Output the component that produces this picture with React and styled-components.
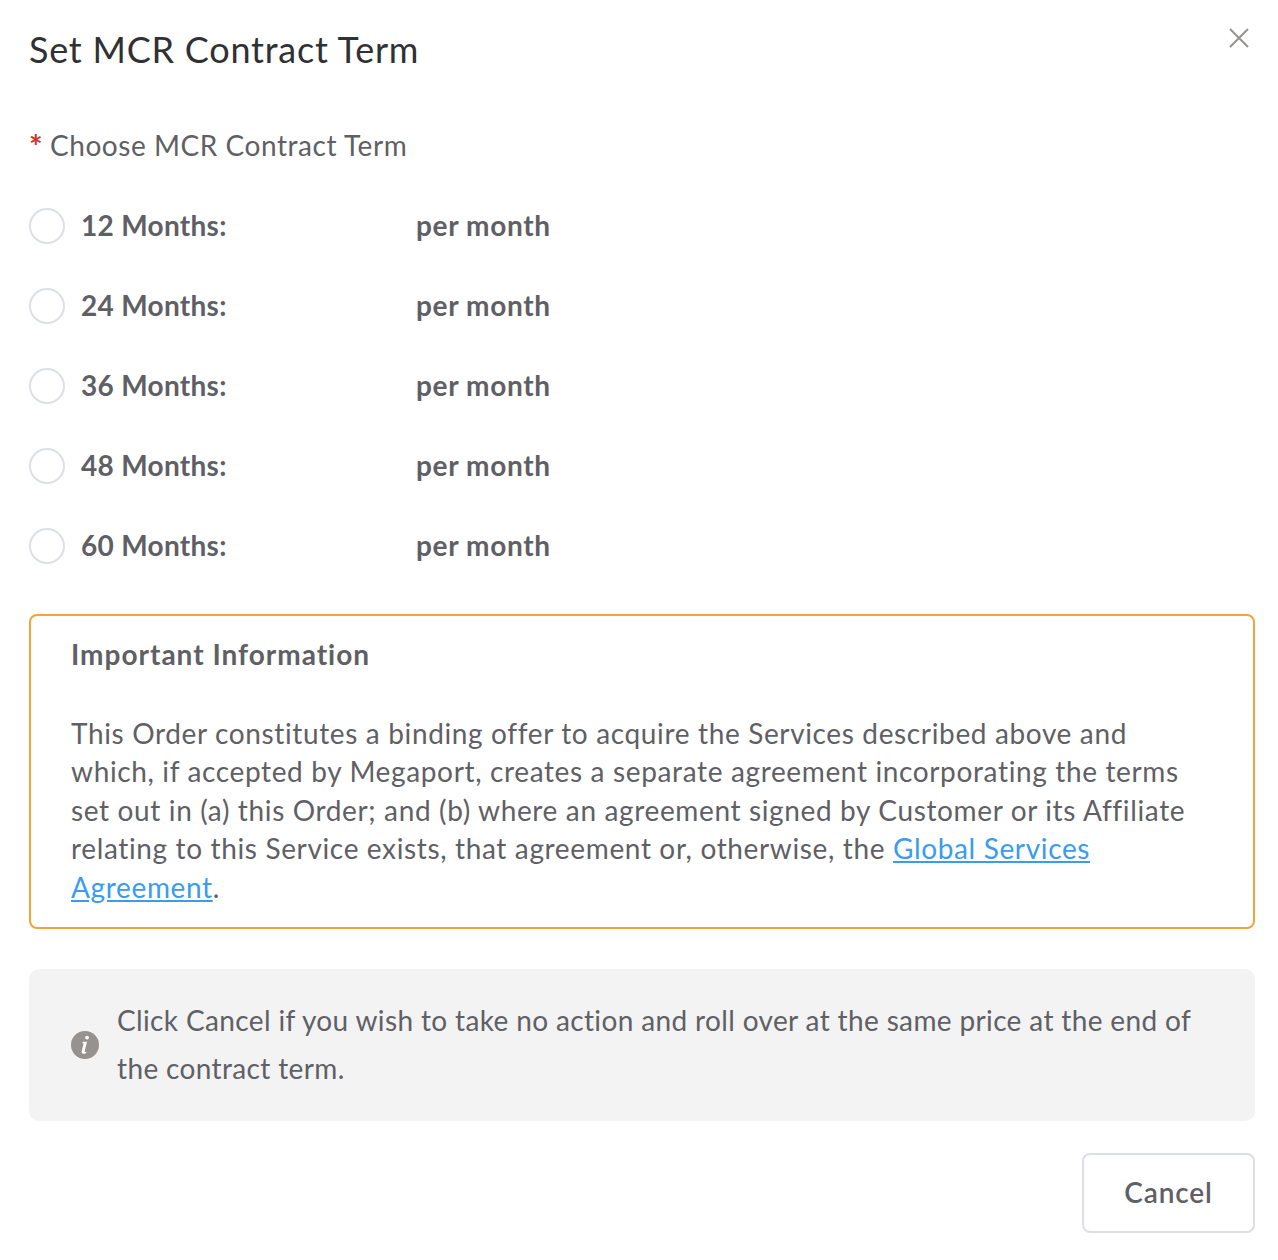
import React from 'react';
import styled, { createGlobalStyle } from 'styled-components';

const GlobalStyle = createGlobalStyle`
  html, body {
    margin: 0;
    padding: 0;
    background: #fff;
  }
  body {
    font-family: "Lato", "Open Sans", sans-serif;
    color: #5f6065;
  }
`;

const Modal = styled.div`
  position: relative;
  box-sizing: border-box;
  width: 1278px;
  height: 1260px;
  padding: 28px 23px 0 29px;
  background: #fff;
`;

const Title = styled.h1`
  margin: 0;
  font-size: 36px;
  line-height: 42px;
  font-weight: 400;
  letter-spacing: 0.77px;
  color: #303133;
`;

const CloseButton = styled.button`
  position: absolute;
  top: 26px;
  right: 27px;
  width: 24px;
  height: 24px;
  padding: 0;
  border: 0;
  background: none;
  color: #98928f;
  cursor: pointer;
`;

const FieldLabel = styled.div`
  display: flex;
  align-items: center;
  gap: 9px;
  margin-top: 55px;
  font-size: 28px;
  line-height: 40px;
  letter-spacing: 0.55px;
`;

const Star = styled.span`
  width: 12px;
  margin-top: 4px;
  font-size: 32px;
  line-height: 32px;
  font-weight: 700;
  color: #d0342c;
`;

const TermList = styled.div`
  display: flex;
  flex-direction: column;
  gap: 44px;
  margin-top: 43px;
`;

const TermRow = styled.label`
  display: flex;
  align-items: center;
  height: 36px;
  font-size: 28px;
  font-weight: 700;
`;

const Radio = styled.span`
  box-sizing: border-box;
  width: 36px;
  height: 36px;
  margin-right: 16px;
  border: 2px solid #dcdfe6;
  border-radius: 50%;
  background: #fff;
`;

const TermName = styled.span`
  width: 335px;
  padding-bottom: 2px;
  letter-spacing: 0.3px;
`;

const TermPrice = styled.span`
  padding-bottom: 2px;
  letter-spacing: 0.65px;
`;

const ImportantBox = styled.section`
  box-sizing: border-box;
  height: 315px;
  margin-top: 50px;
  padding: 19px 40px 0;
  border: 2px solid #f0a53c;
  border-radius: 8px;
`;

const ImportantTitle = styled.h2`
  margin: 0 0 40.75px;
  font-size: 28px;
  line-height: 38px;
  font-weight: 700;
  letter-spacing: 1px;
  color: #5f6065;
`;

const ImportantText = styled.p`
  margin: 0;
  font-size: 28px;
  line-height: 38.5px;
  letter-spacing: 0.64px;
`;

const TextLink = styled.a`
  color: #3a9bf0;
  text-decoration: underline;
`;

const Notice = styled.div`
  box-sizing: border-box;
  display: flex;
  align-items: center;
  gap: 18px;
  height: 152px;
  margin-top: 40px;
  padding: 0 42px;
  border-radius: 10px;
  background: #f3f3f4;
  font-size: 28px;
  line-height: 48px;
  letter-spacing: 0.36px;
`;

const NoticeText = styled.span`
  padding-bottom: 2px;
`;

const InfoIcon = styled.svg`
  flex: none;
  width: 28px;
  height: 28px;
`;

const Footer = styled.div`
  display: flex;
  justify-content: flex-end;
  margin-top: 32px;
`;

const CancelButton = styled.button`
  box-sizing: border-box;
  width: 173px;
  height: 80px;
  padding: 0 0 2px;
  border: 2px solid #dcdfe6;
  border-radius: 8px;
  background: #fff;
  color: #5f6065;
  font-family: inherit;
  font-size: 28px;
  font-weight: 600;
  letter-spacing: 0.85px;
  cursor: pointer;
`;

const terms = ['12 Months:', '24 Months:', '36 Months:', '48 Months:', '60 Months:'];

export default function App() {
  return (
    <>
      <GlobalStyle />
      <Modal>
        <Title>Set MCR Contract Term</Title>
        <CloseButton aria-label="Close">
          <svg viewBox="0 0 24 24" width="24" height="24" fill="none" stroke="currentColor" strokeWidth="2">
            <path d="M3 3 L21 21 M21 3 L3 21" />
          </svg>
        </CloseButton>

        <FieldLabel>
          <Star>*</Star>
          <span>Choose MCR Contract Term</span>
        </FieldLabel>

        <TermList>
          {terms.map((term) => (
            <TermRow key={term}>
              <Radio />
              <TermName>{term}</TermName>
              <TermPrice>per month</TermPrice>
            </TermRow>
          ))}
        </TermList>

        <ImportantBox>
          <ImportantTitle>Important Information</ImportantTitle>
          <ImportantText>
            This Order constitutes a binding offer to acquire the Services described above and
            which, if accepted by Megaport, creates a separate agreement incorporating the terms
            set out in (a) this Order; and (b) where an agreement signed by Customer or its Affiliate
            relating to this Service exists, that agreement or, otherwise, the{' '}
            <TextLink href="#">Global Services Agreement</TextLink>.
          </ImportantText>
        </ImportantBox>

        <Notice>
          <InfoIcon viewBox="0 0 28 28">
            <circle cx="14" cy="14" r="14" fill="#98928f" />
            <circle cx="16" cy="6.6" r="1.9" fill="#fff" />
            <path d="M11.6 10.8 H16 L13.6 20.6 Q13.4 21.6 15.4 20.6 L15 22.2 Q10.4 24 10.6 20.8 L12.6 12.2 H11.4 Z" fill="#fff" />
          </InfoIcon>
          <NoticeText>Click Cancel if you wish to take no action and roll over at the same price at the end of the contract term.</NoticeText>
        </Notice>

        <Footer>
          <CancelButton>Cancel</CancelButton>
        </Footer>
      </Modal>
    </>
  );
}
